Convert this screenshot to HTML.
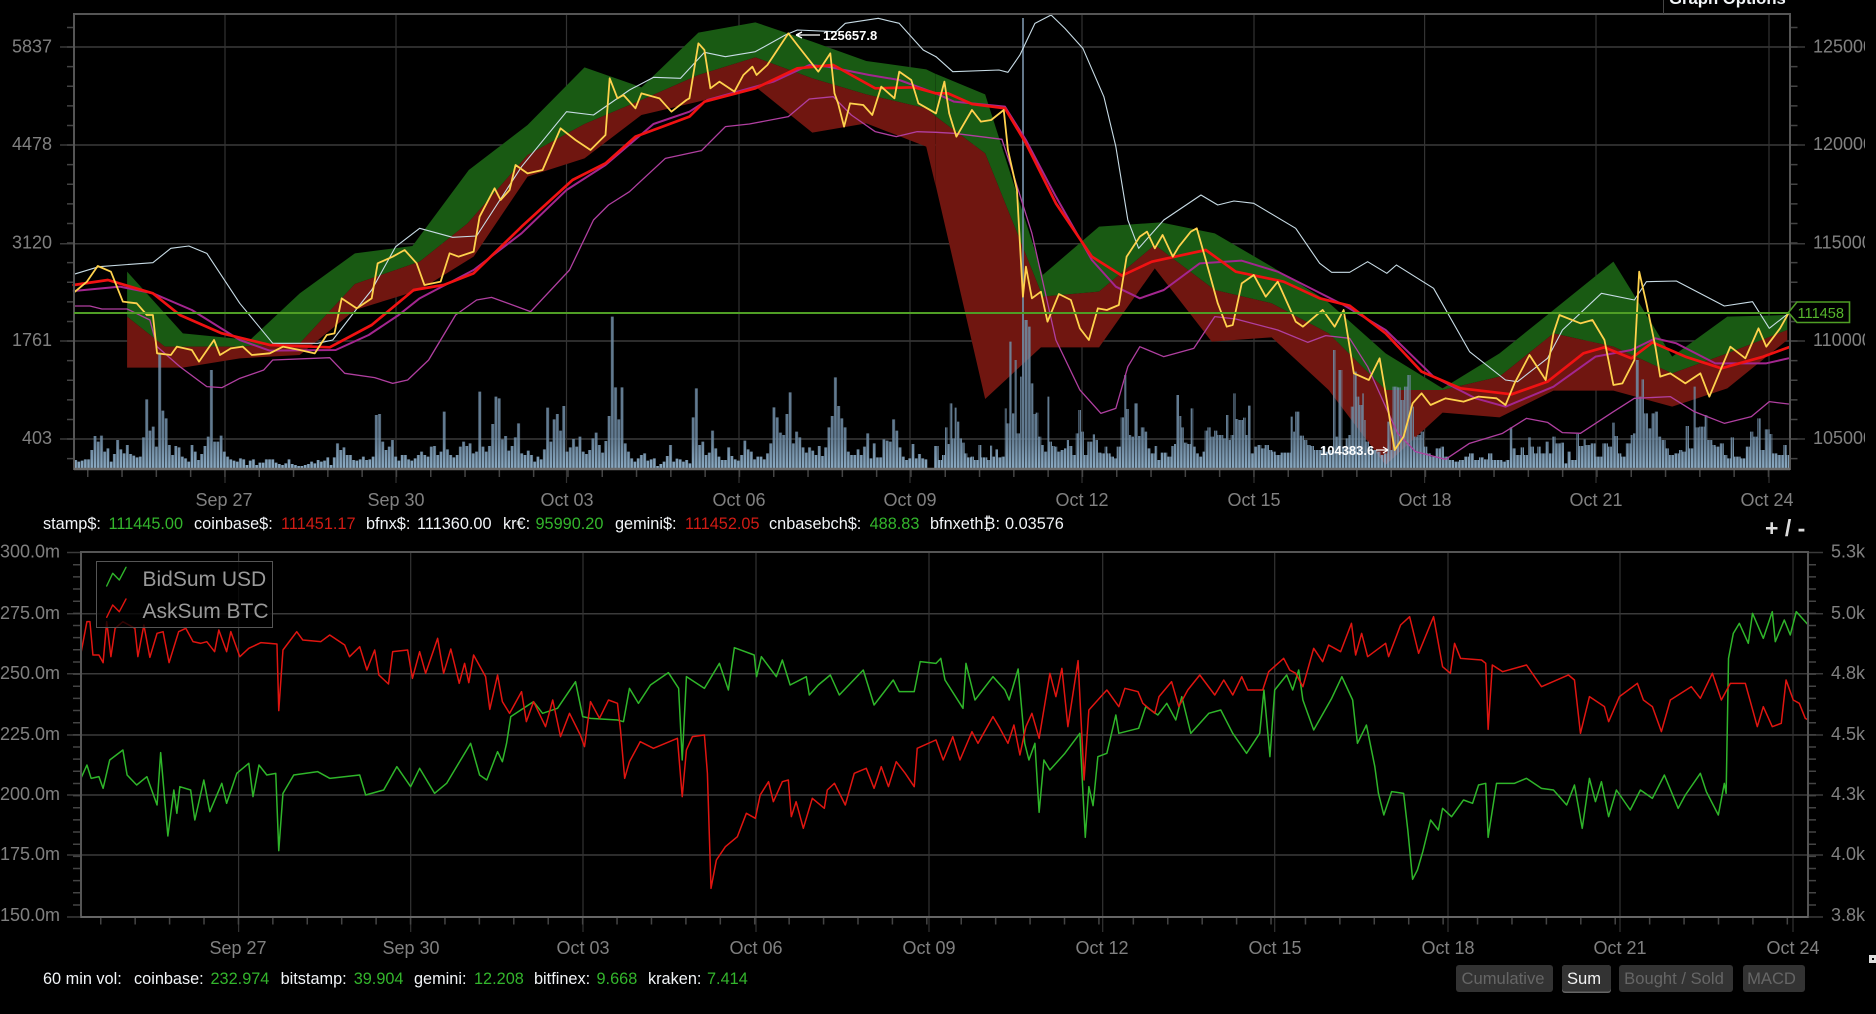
<!DOCTYPE html>
<html>
<head>
<meta charset="utf-8">
<style>
html,body{margin:0;padding:0;background:#000;width:1876px;height:1014px;overflow:hidden}
svg{display:block;font-family:"Liberation Sans",sans-serif}
.l{fill:none;stroke-linejoin:round;stroke-linecap:round;vector-effect:non-scaling-stroke}
.ax{fill:#808080;font-size:18px}
.i{font-size:16.3px;fill:#f2f5f8}
.g{font-size:16.3px;fill:#33b52c}
.r{font-size:16.3px;fill:#d01b14}
.b{font-size:16.6px;fill:#666;text-anchor:middle}
</style>
</head>
<body>
<svg width="1876" height="1014" viewBox="0 0 1876 1014" xmlns="http://www.w3.org/2000/svg">
<defs>
<clipPath id="rc"><rect x="1806" y="20" width="59" height="440"/></clipPath>
<linearGradient id="vg" gradientUnits="userSpaceOnUse" x1="0" x2="0" y1="0" y2="1388">
<stop offset="0" stop-color="#71879c"/>
<stop offset="0.93" stop-color="#6f8ca5"/>
<stop offset="1" stop-color="#a0c4e0"/>
</linearGradient>
<pattern id="vp" patternUnits="userSpaceOnUse" x="0" y="-1000" width="9.7" height="1400">
<rect x="0" y="0" width="9.7" height="1400" fill="#6a8398" fill-opacity=".4"/>
<rect x="1" y="0" width="7.5" height="1400" fill="url(#vg)"/>
</pattern>
</defs>

<!-- Top chart grid -->
<g stroke="#3a3a3a" stroke-width="1.5">
<line x1="60" x2="1805" y1="47" y2="47"/><line x1="60" x2="1805" y1="145" y2="145"/><line x1="60" x2="1805" y1="243.7" y2="243.7"/><line x1="60" x2="1805" y1="341" y2="341"/><line x1="60" x2="1805" y1="439" y2="439"/>
</g>
<g stroke="#333" stroke-width="1.2">
<line x1="225" x2="225" y1="14" y2="483"/><line x1="396" x2="396" y1="14" y2="483"/><line x1="566.5" x2="566.5" y1="14" y2="483"/><line x1="739" x2="739" y1="14" y2="483"/><line x1="910" x2="910" y1="14" y2="483"/><line x1="1082" x2="1082" y1="14" y2="483"/><line x1="1254" x2="1254" y1="14" y2="483"/><line x1="1424.6" x2="1424.6" y1="14" y2="483"/><line x1="1596" x2="1596" y1="14" y2="483"/><line x1="1769" x2="1769" y1="14" y2="483"/>
</g>
<g stroke="#444" fill="none">
<line x1="70.5" x2="70.5" y1="26.7" y2="460" stroke-width="7" stroke-dasharray="1.5 18.1"/>
<line x1="1794" x2="1794" y1="26.7" y2="460" stroke-width="7" stroke-dasharray="1.5 18.1"/>
<line x1="87" x2="1790" y1="473" y2="473" stroke-width="8" stroke-dasharray="1.5 32.8"/>
</g>

<!-- Bands, Z1 -->
<g transform="scale(0.59949,0.33333)">
<polygon fill="#195a13" points="212,815 305,1000 417,1020 500,880 592,760 688,738 782,510 880,375 975,202 1070,262 1165,98 1260,67 1355,125 1445,183 1545,208 1561,222 1561,350 1545,325 1445,283 1355,235 1260,172 1165,225 1070,300 975,372 880,465 780,670 700,785 592,852 500,1030 400,1040 275,1040 212,950"/>
<polygon fill="#701610" points="212,950 275,1040 400,1040 500,1030 592,852 700,785 780,670 880,465 975,372 1070,300 1165,225 1260,172 1355,235 1445,283 1545,325 1561,350 1561,560 1545,440 1445,370 1355,398 1260,260 1165,305 1070,345 975,475 880,530 790,770 700,870 592,930 500,1065 400,1075 305,1103 212,1103"/>
</g>
<!-- Bands, Z2 -->
<g transform="translate(936,0) scale(0.59949,0.33333)">
<polygon fill="#195a13" points="0,222 82,283 178,825 272,680 375,667 465,700 560,800 650,900 750,1060 845,1165 940,1060 1030,930 1130,785 1228,1070 1320,950 1420,945 1420,990 1320,1060 1228,1120 1130,1040 1030,1000 940,1130 845,1170 750,1170 655,1000 560,910 465,870 365,735 272,875 178,890 82,460 0,350"/>
<polygon fill="#701610" points="0,350 82,460 178,890 272,875 365,735 465,870 560,910 655,1000 750,1170 845,1170 940,1130 1030,1000 1130,1040 1228,1120 1320,1060 1420,990 1420,1020 1320,1165 1228,1220 1130,1172 1030,1172 940,1252 845,1238 750,1395 655,1170 560,1012 460,1025 365,805 272,1042 175,1042 82,1197 0,560"/>
</g>

<!-- Volume bars -->
<g fill="url(#vp)" fill-opacity=".88">
<path transform="translate(74,340) scale(.33333)" d="M0 388V360h9.7V365h9.7V362h9.7V358h9.7V358h9.7V330h9.7V288h9.7V305h9.7V287h9.7V335h9.7V325h9.7V365h9.7V342h9.7V300h9.7V328h9.7V340h9.7V315h9.7V342h9.7V347h9.7V352h9.7V350h9.7V292h9.7V178h9.7V272h9.7V260h9.7V320h9.7V40h9.7V212h9.7V235h9.7V315h9.7V345h9.7V318h9.7V322h9.7V350h9.7V355h9.7V365h9.7V315h9.7V335h9.7V360h9.7V342h9.7V318h9.7V290h9.7V90h9.7V305h9.7V305h9.7V287h9.7V335h9.7V350h9.7V358h9.7V362h9.7V365h9.7V355h9.7V358h9.7V375h9.7V362h9.7V358h9.7V375h9.7V368h9.7V368h9.7V358h9.7V358h9.7V358h9.7V368h9.7V372h9.7V375h9.7V370h9.7V358h9.7V372h9.7V375h9.7V378h9.7V378h9.7V375h9.7V372h9.7V365h9.7V370h9.7V360h9.7V365h9.7V362h9.7V352h9.7V375h9.7V352h9.7V310h9.7V330h9.7V322h9.7V345h9.7V345h9.7V360h9.7V362h9.7V358h9.7V350h9.7V360h9.7V358h9.7V350h9.7V225h9.7V222h9.7V305h9.7V330h9.7V320h9.7V300h9.7V350h9.7V362h9.7V345h9.7V345h9.7V358h9.7V362h9.7V355h9.7V345h9.7V335h9.7V345h9.7V350h9.7V320h9.7V318h9.7V345h9.7V335h9.7V215h9.7V328h9.7V345h9.7V352h9.7V345h9.7V320h9.7V305h9.7V318h9.7V310h9.7V340h9.7V335h9.7V155h9.7V320h9.7V335h9.7V318h9.7V252h9.7V170h9.7V175h9.7V298h9.7V388z"/>
<path transform="translate(504,340) scale(.33333)" d="M0 388V288h9.7V332h9.7V318h9.7V292h9.7V250h9.7V340h9.7V345h9.7V332h9.7V345h9.7V365h9.7V350h9.7V358h9.7V328h9.7V203h9.7V305h9.7V238h9.7V222h9.7V272h9.7V198h9.7V335h9.7V322h9.7V297h9.7V320h9.7V290h9.7V335h9.7V342h9.7V330h9.7V295h9.7V278h9.7V315h9.7V338h9.7V303h9.7V228h9.7V-70h9.7V142h9.7V238h9.7V142h9.7V310h9.7V335h9.7V355h9.7V365h9.7V355h9.7V345h9.7V340h9.7V362h9.7V358h9.7V355h9.7V378h9.7V372h9.7V365h9.7V348h9.7V315h9.7V365h9.7V356h9.7V358h9.7V365h9.7V360h9.7V370h9.7V232h9.7V145h9.7V315h9.7V305h9.7V345h9.7V338h9.7V272h9.7V325h9.7V350h9.7V360h9.7V360h9.7V322h9.7V348h9.7V358h9.7V362h9.7V345h9.7V302h9.7V328h9.7V335h9.7V358h9.7V350h9.7V350h9.7V358h9.7V340h9.7V310h9.7V202h9.7V232h9.7V278h9.7V285h9.7V222h9.7V157h9.7V310h9.7V275h9.7V292h9.7V322h9.7V338h9.7V322h9.7V332h9.7V345h9.7V318h9.7V348h9.7V322h9.7V262h9.7V228h9.7V112h9.7V198h9.7V235h9.7V262h9.7V335h9.7V345h9.7V345h9.7V328h9.7V345h9.7V320h9.7V280h9.7V355h9.7V310h9.7V352h9.7V352h9.7V298h9.7V302h9.7V305h9.7V238h9.7V272h9.7V322h9.7V350h9.7V360h9.7V355h9.7V312h9.7V355h9.7V342h9.7V355h9.7V358h9.7V388z"/>
<path transform="translate(934,340) scale(.33333)" d="M0 388V318H14V360H24V345H33V262H41V312H47V190H55V295H62V203H69V245H76V295H84V308H92V340H100V352H110V350H120V360H133V315H142V352H150V352H160V360H168V317H175V350H183V328H192V352H202V350H212V205H218V250H226V5H234V220H241V60H248V280H258V110H264V-966H270V-60H282V-40H290V130H298V222H305V218H313V290H322V315H330V335H340V170H346V305H354V318H362V320H370V335H380V330H390V325H398V300H405V318H415V345H425V280H433V210H441V275H450V345H460V305H468V305H476V283H483V300H492V338H502V340H512V320H520V340H530V350H540V355H548V320H560V232H570V105H577V207H585V285H592V290H600V190H612V288H620V262H632V275H640V325H650V340H662V318H670V360H680V338H690V338H700V350H712V318H720V312H726V165H735V228H742V262H750V308H760V312H770V205H778V320H786V340H795V350H805V335H812V272H820V262H830V290H840V272H850V285H857V285H868V295H876V225H884V300H890V285H898V160H905V237H913V240H927V233H935V285H942V197H950V340H960V320H970V315H982V325H992V315H1005V330H1015V335H1025V345H1040V338H1060V338H1070V230H1077V275H1083V215H1097V287H1110V300H1120V315H1130V318H1140V330H1155V330H1165V320H1175V335H1185V330H1197V30H1205V290H1213V90H1225V320H1235V295H1243V285H1250V200H1258V95H1268V170H1276V195H1285V160H1290V388z"/>
<path transform="translate(1364,340) scale(.33333)" d="M0 388V240H5V305H15V320H25V330H40V335H50V345H60V340H70V245H80V330H85V140H100V142H110V180H120V140H130V105H140V200H150V290H160V285H170V275H180V320H190V340H200V350H215V325H230V320H240V350H255V360H270V365H285V360H300V350H315V340H330V360H345V352H360V358H372V340H385V360H400V360H415V365H425V360H437V262H445V325H455V345H470V322H480V345H492V292H500V320H510V340H520V320H530V340H545V305H555V340H565V290H575V310H590V308H600V370H610V335H620V360H637V282H645V318H658V298H665V315H680V310H695V350H715V310H725V310H732V320H744V248H752V288H762V340H772V350H785V310H800V285H807V280H815V60H825V170H832V118H840V220H852V265H862V220H872V215H882V290H892V300H905V325H915V345H930V340H945V330H955V335H965V258H975V325H988V140H995V262H1005V260H1022V225H1030V300H1045V315H1055V320H1067V310H1080V345H1090V355H1100V292H1110V350H1130V355H1145V320H1158V275H1168V290H1180V235H1190V330H1202V268H1217V282H1225V340H1240V345H1258V315H1268V345H1278V350H1278V388z"/>
</g>

<!-- Top chart lines, Z1 -->
<g transform="scale(0.59949,0.33333)">
<polyline class="l" stroke="#c8dce6" stroke-width="1.1" points="123,823 165,800 255,788 285,745 315,738 345,760 400,910 455,1030 530,1030 555,1020 600,915 620,870 660,740 700,685 755,712 795,708 870,500 945,335 990,345 1050,270 1090,232 1135,235 1175,157 1210,170 1260,155 1310,105 1330,90 1395,95 1410,70 1465,55 1500,70 1540,150 1561,170"/>
<polyline class="l" stroke="#b03fa0" stroke-width="1.3" points="123,918 150,918 170,927 212,927 250,960 262,1040 300,1100 345,1160 370,1163 400,1135 440,1110 455,1080 550,1073 575,1120 625,1133 655,1150 680,1140 715,1080 760,945 795,900 820,892 885,935 950,810 990,660 1015,615 1050,575 1110,475 1170,452 1210,380 1250,372 1315,350 1350,297 1390,290 1420,345 1460,395 1495,410 1530,395 1561,397"/>
<polyline class="l" stroke="#a3268f" stroke-width="2" points="123,873 200,860 255,880 320,930 400,1020 450,1052 560,1050 615,1005 665,945 700,895 790,810 870,700 945,570 1010,495 1090,372 1150,335 1180,300 1290,245 1350,195 1380,200 1450,225 1500,240 1561,280"/>
<polyline class="l" stroke="#f01212" stroke-width="2.7" points="123,855 180,840 255,880 300,945 370,1000 450,1035 550,1042 620,975 690,870 740,855 790,820 870,680 955,540 1010,490 1060,410 1150,350 1175,305 1260,265 1330,205 1390,195 1460,265 1525,262 1561,280"/>
<polyline class="l" stroke="#ffd24d" stroke-width="1.8" points="125,875 145,845 163,798 185,815 205,905 228,910 245,945 255,945 262,1060 285,1065 295,1040 320,1050 332,1085 357,1020 367,1065 385,1045 405,1040 420,1065 450,1060 472,1040 500,1050 525,1060 545,1005 558,1000 570,895 595,925 620,895 630,790 655,770 675,750 695,790 708,855 735,845 750,760 765,770 790,755 800,650 825,565 835,600 850,570 860,495 880,520 905,510 935,385 960,420 985,450 1010,405 1017,235 1030,295 1040,285 1060,325 1070,280 1100,295 1120,335 1145,300 1150,295 1165,130 1175,150 1185,265 1200,245 1225,275 1240,225 1255,200 1262,225 1280,195 1315,100 1330,135 1365,215 1385,160 1392,280 1398,310 1408,380 1418,310 1440,315 1455,345 1470,260 1492,295 1500,215 1520,240 1532,310 1561,340"/>
</g>
<!-- Top chart lines, Z2 -->
<g transform="translate(936,0) scale(0.59949,0.33333)">
<polyline class="l" stroke="#c8dce6" stroke-width="1.1" points="0,170 28,215 105,210 120,217 140,165 165,70 192,45 215,85 245,145 280,290 300,440 320,660 338,745 380,660 442,585 470,615 497,603 530,610 600,685 640,790 660,817 690,817 720,785 752,820 768,795 830,865 890,1055 950,1140 970,1145 1020,1075 1045,990 1110,880 1165,900 1185,845 1235,843 1315,918 1362,905 1390,985 1422,940"/>
<polyline class="l" stroke="#b03fa0" stroke-width="1.3" points="0,397 30,400 110,418 125,500 160,700 200,1020 240,1170 275,1240 300,1225 320,1100 340,1040 380,1070 430,1045 465,950 500,957 570,990 620,1027 650,1007 690,1015 720,1100 770,1300 800,1355 850,1378 890,1330 945,1300 985,1255 1020,1267 1045,1298 1075,1300 1130,1235 1165,1195 1225,1190 1265,1235 1315,1270 1360,1250 1390,1205 1422,1212"/>
<polyline class="l" stroke="#a3268f" stroke-width="2" points="0,280 30,305 115,320 150,420 200,590 260,780 300,860 340,895 380,870 440,790 510,782 570,815 680,915 750,990 830,1130 900,1195 950,1220 1030,1160 1100,1070 1160,1050 1200,1015 1235,1030 1300,1090 1385,1090 1422,1075"/>
<polyline class="l" stroke="#f01212" stroke-width="2.7" points="0,280 20,280 60,312 115,325 150,430 200,610 260,770 310,827 360,785 450,750 500,815 580,845 640,895 690,917 750,1000 810,1115 875,1165 960,1183 1020,1145 1080,1060 1115,1042 1160,1075 1195,1027 1250,1070 1310,1105 1380,1070 1422,1042"/>
<polyline class="l" stroke="#ffd24d" stroke-width="1.8" points="0,340 14,245 22,340 34,410 60,330 75,365 92,360 113,330 120,450 135,570 145,890 150,800 160,895 175,875 186,965 205,882 225,900 240,985 255,1020 270,925 285,930 305,915 318,770 340,710 352,695 365,745 378,705 395,770 405,740 425,695 435,685 450,780 470,910 485,980 495,975 510,850 530,825 550,890 570,845 600,965 612,980 645,930 665,980 680,930 697,1120 722,1140 740,1075 750,1180 765,1350 780,1310 795,1210 810,1180 825,1215 850,1195 880,1205 905,1190 935,1195 950,1215 965,1150 990,1065 1017,1140 1030,1000 1040,945 1075,970 1095,960 1115,1020 1130,1155 1145,1150 1165,1080 1173,815 1185,910 1200,1040 1208,1130 1225,1120 1250,1150 1275,1120 1290,1190 1325,1040 1350,1075 1372,985 1385,1040 1408,985 1422,940"/>
</g>

<!-- Top axes frame -->
<g fill="none">
<rect x="74" y="14" width="1716" height="455" stroke="#555" stroke-width="2"/>
<line x1="74" x2="1790" y1="469" y2="469" stroke="#6a6a6a" stroke-width="2.5"/>
</g>
<line x1="74" x2="1790" y1="313" y2="313" stroke="#4f9e25" stroke-width="2"/>

<!-- Graph options -->
<g>
<line x1="1663.5" x2="1663.5" y1="0" y2="14" stroke="#444"/>
<text x="1669" y="4" font-size="16.7" font-weight="bold" fill="#f2f5f8">Graph Options</text>
</g>

<!-- Top y labels -->
<g class="ax" text-anchor="end">
<text x="52" y="52.3">5837</text><text x="52" y="150">4478</text><text x="52" y="248.7">3120</text><text x="52" y="346">1761</text><text x="52" y="444">403</text>
</g>
<g class="ax" clip-path="url(#rc)">
<text x="1813" y="52.3">125000</text><text x="1813" y="150">120000</text><text x="1813" y="248.7">115000</text><text x="1813" y="346">110000</text><text x="1813" y="444">105000</text>
</g>
<!-- Top x labels -->
<g class="ax" text-anchor="middle">
<text x="224" y="506">Sep 27</text><text x="396" y="506">Sep 30</text><text x="567" y="506">Oct 03</text><text x="739" y="506">Oct 06</text><text x="910" y="506">Oct 09</text><text x="1082" y="506">Oct 12</text><text x="1254" y="506">Oct 15</text><text x="1425" y="506">Oct 18</text><text x="1596" y="506">Oct 21</text><text x="1767" y="506">Oct 24</text>
</g>

<!-- Annotations -->
<path d="M796 35H820M796 35l6-3M796 35l6 3" stroke="#fff" stroke-width="1.3" fill="none"/>
<text x="823" y="40" font-size="13" font-weight="bold" fill="#fff">125657.8</text>
<text x="1320" y="455" font-size="13" font-weight="bold" fill="#fff">104383.6</text>
<path d="M1376 450H1388M1388 450l-5-3M1388 450l-5 3" stroke="#fff" stroke-width="1.3" fill="none"/>

<!-- Price tag -->
<polygon points="1788.5,312.5 1797,302 1849.5,302 1849.5,322.5 1797,322.5" fill="#000" stroke="#4f9e25" stroke-width="1.6"/>
<text x="1797.5" y="318" font-size="14.6" fill="#55b52c">111458</text>

<!-- Info line 1 -->
<text class="i" x="43" y="529">stamp$:</text><text class="g" x="108.5" y="529">111445.00</text>
<text class="i" x="194" y="529">coinbase$:</text><text class="r" x="281" y="529">111451.17</text>
<text class="i" x="366" y="529">bfnx$:</text><text class="i" x="417" y="529">111360.00</text>
<text class="i" x="503" y="529">kr€:</text><text class="g" x="535.5" y="529">95990.20</text>
<text class="i" x="615" y="529">gemini$:</text><text class="r" x="685" y="529">111452.05</text>
<text class="i" x="769" y="529">cnbasebch$:</text><text class="g" x="869.6" y="529">488.83</text>
<text class="i" x="930" y="529">bfnxeth₿:</text><text class="i" x="1005" y="529">0.03576</text>
<text x="1765" y="536" font-size="23" font-weight="bold" fill="#dcdcdc">+ / -</text>

<!-- Bottom chart grid -->
<g stroke="#3a3a3a" stroke-width="1.5">
<line x1="67" x2="1823" y1="613.7" y2="613.7"/><line x1="67" x2="1823" y1="673.7" y2="673.7"/><line x1="67" x2="1823" y1="735" y2="735"/><line x1="67" x2="1823" y1="795" y2="795"/><line x1="67" x2="1823" y1="855" y2="855"/>
<line x1="67" x2="81" y1="552.5" y2="552.5"/><line x1="1808" x2="1823" y1="552.5" y2="552.5"/><line x1="67" x2="81" y1="917" y2="917"/><line x1="1808" x2="1823" y1="917" y2="917"/>
</g>
<g stroke="#333" stroke-width="1.2">
<line x1="238.6" x2="238.6" y1="552" y2="932"/><line x1="410.7" x2="410.7" y1="552" y2="932"/><line x1="583" x2="583" y1="552" y2="932"/><line x1="756" x2="756" y1="552" y2="932"/><line x1="929" x2="929" y1="552" y2="932"/><line x1="1102.7" x2="1102.7" y1="552" y2="932"/><line x1="1274.7" x2="1274.7" y1="552" y2="932"/><line x1="1448" x2="1448" y1="552" y2="932"/><line x1="1620" x2="1620" y1="552" y2="932"/><line x1="1793" x2="1793" y1="552" y2="932"/>
</g>
<g stroke="#444" fill="none">
<line x1="77" x2="77" y1="564" y2="910" stroke-width="8" stroke-dasharray="1.5 10.65"/>
<line x1="1812" x2="1812" y1="564" y2="910" stroke-width="8" stroke-dasharray="1.5 10.65"/>
<line x1="100" x2="1808" y1="921" y2="921" stroke-width="7" stroke-dasharray="1.5 32.92"/>
</g>

<!-- Bottom lines, Z3 -->
<g transform="translate(0,500) scale(0.59949,0.33333)">
<polyline class="l" stroke="#2fb52a" stroke-width="1.5" points="135,835 145,795 152,835 165,830 172,865 183,780 205,750 212,825 228,855 245,830 262,915 268,758 280,1008 290,870 295,940 300,860 318,870 325,960 340,840 350,935 370,850 378,910 395,820 415,790 422,890 432,795 445,825 460,820 465,1052 472,880 490,825 530,815 550,835 600,825 610,885 640,870 662,800 685,860 700,805 725,880 745,850 770,775 785,730 800,825 812,840 830,755 838,785 845,730 852,650 890,605 905,640 930,625 960,545 972,650 985,655 1030,660 1040,665 1050,565 1065,610 1085,555 1115,518 1132,565 1138,780 1145,530 1175,565 1200,490 1215,570 1225,443 1258,465 1262,530 1270,470 1295,530 1305,480 1318,555 1345,530 1350,585 1365,555 1385,525 1400,585 1440,510 1458,615 1490,540 1500,575 1525,575 1535,485 1561,490"/>
<polyline class="l" stroke="#e01510" stroke-width="1.5" points="135,460 145,365 150,365 155,465 165,465 172,488 178,365 185,470 192,385 205,365 225,385 230,470 240,375 250,472 262,400 272,395 282,488 298,395 310,385 322,425 335,430 345,425 358,455 365,390 378,455 385,395 400,470 415,445 435,428 462,432 465,632 472,450 495,395 505,420 535,425 550,405 575,435 583,470 600,440 612,510 625,450 632,525 648,552 655,455 680,450 688,535 700,455 710,520 730,415 740,520 752,447 766,550 775,490 782,548 790,465 810,530 817,628 830,525 838,605 850,640 870,575 878,665 890,605 910,680 922,600 935,710 950,640 968,705 975,740 985,605 1000,655 1015,600 1030,610 1035,690 1042,835 1050,785 1068,725 1090,745 1130,715 1138,890 1145,750 1155,710 1175,705 1180,820 1186,1165 1195,1080 1210,1040 1230,1010 1245,940 1260,955 1268,885 1282,845 1290,905 1305,845 1315,840 1320,950 1328,905 1340,985 1355,895 1375,925 1380,870 1392,850 1410,915 1425,820 1445,805 1458,865 1470,800 1482,860 1495,785 1510,820 1525,860 1530,745 1561,720"/>
</g>
<!-- Bottom lines, Z4 -->
<g transform="translate(936,500) scale(0.59949,0.33333)">
<polyline class="l" stroke="#2fb52a" stroke-width="1.5" points="0,490 8,475 15,540 45,625 50,490 65,600 95,530 115,570 122,600 137,507 148,730 155,780 165,730 172,937 180,780 190,810 215,760 240,700 249,1012 255,860 262,917 270,770 285,760 300,645 305,700 338,685 350,620 370,645 385,610 400,660 410,590 425,700 455,640 475,630 495,700 518,760 540,700 547,570 557,770 565,570 585,525 595,570 605,510 612,600 630,690 660,595 677,530 695,600 703,730 718,675 732,800 738,880 747,945 760,875 780,880 787,990 795,1138 803,1110 812,1055 825,960 838,990 845,925 860,950 880,900 895,910 905,855 917,850 921,1012 935,850 965,850 985,835 1010,865 1030,870 1052,915 1065,855 1078,985 1090,835 1100,905 1110,845 1122,950 1135,870 1158,930 1175,870 1195,895 1215,825 1238,925 1250,885 1275,820 1285,875 1305,945 1315,850 1318,880 1322,475 1330,400 1340,370 1355,430 1362,340 1380,415 1395,335 1400,425 1415,360 1425,405 1435,335 1455,375"/>
<polyline class="l" stroke="#e01510" stroke-width="1.5" points="0,720 12,780 28,710 40,780 60,695 70,730 95,650 105,680 120,730 130,675 140,765 150,680 160,640 172,715 190,520 200,590 210,505 220,680 237,482 247,840 255,630 275,590 285,570 305,620 315,565 337,575 345,610 365,640 372,590 393,545 405,620 420,570 440,525 465,585 480,540 495,585 510,530 520,570 545,570 555,515 580,475 590,510 600,520 612,560 630,445 645,485 655,435 675,455 693,370 700,465 710,400 720,470 750,430 755,470 775,375 790,350 805,460 830,350 845,500 858,520 865,430 875,475 910,480 917,490 921,688 928,495 945,515 985,495 1010,560 1055,525 1065,540 1075,700 1090,590 1115,620 1122,665 1140,590 1170,550 1180,600 1195,620 1210,695 1225,600 1260,560 1275,595 1295,520 1310,600 1325,550 1350,550 1370,680 1380,620 1395,680 1410,670 1418,540 1430,600 1440,610 1450,655 1455,660"/>
</g>

<!-- Bottom axes -->
<rect x="81" y="552" width="1727" height="365" fill="none" stroke="#555" stroke-width="2"/>
<line x1="81" x2="1808" y1="917" y2="917" stroke="#666" stroke-width="2"/>
<g class="ax" text-anchor="end">
<text x="60" y="557.5">300.0m</text><text x="60" y="619">275.0m</text><text x="60" y="679">250.0m</text><text x="60" y="740">225.0m</text><text x="60" y="800">200.0m</text><text x="60" y="860">175.0m</text><text x="60" y="921">150.0m</text>
</g>
<g class="ax">
<text x="1831" y="557.5">5.3k</text><text x="1831" y="619">5.0k</text><text x="1831" y="679">4.8k</text><text x="1831" y="740">4.5k</text><text x="1831" y="800">4.3k</text><text x="1831" y="860">4.0k</text><text x="1831" y="921">3.8k</text>
</g>
<g class="ax" text-anchor="middle">
<text x="238" y="954">Sep 27</text><text x="411" y="954">Sep 30</text><text x="583" y="954">Oct 03</text><text x="756" y="954">Oct 06</text><text x="929" y="954">Oct 09</text><text x="1102" y="954">Oct 12</text><text x="1275" y="954">Oct 15</text><text x="1448" y="954">Oct 18</text><text x="1620" y="954">Oct 21</text><text x="1793" y="954">Oct 24</text>
</g>

<!-- Legend -->
<rect x="96.5" y="561.5" width="176" height="66" fill="#000" fill-opacity=".78" stroke="#555" stroke-width="1"/>
<polyline class="l" stroke="#2fb52a" stroke-width="1.4" points="106.7,586 112.7,573.3 119.3,580 126,567.3"/>
<polyline class="l" stroke="#e01510" stroke-width="1.4" points="106.7,617.3 112.7,605 119.3,611.7 126,599"/>
<text x="142.5" y="586" font-size="21" fill="#999">BidSum USD</text>
<text x="142.5" y="618" font-size="21" fill="#999">AskSum BTC</text>

<!-- Info line 2 -->
<text class="i" x="43" y="984">60 min vol:</text>
<text class="i" x="134" y="984">coinbase:</text><text class="g" x="210.5" y="984">232.974</text>
<text class="i" x="280.6" y="984">bitstamp:</text><text class="g" x="353.7" y="984">39.904</text>
<text class="i" x="414" y="984">gemini:</text><text class="g" x="474" y="984">12.208</text>
<text class="i" x="534" y="984">bitfinex:</text><text class="g" x="596.5" y="984">9.668</text>
<text class="i" x="648" y="984">kraken:</text><text class="g" x="707" y="984">7.414</text>

<!-- Buttons -->
<rect x="1456" y="965" width="97" height="27" rx="3" fill="#333"/><text class="b" x="1503" y="984">Cumulative</text>
<rect x="1562" y="965" width="49" height="28" rx="3" fill="#666"/><rect x="1562" y="965" width="49" height="26.5" rx="3" fill="#333"/><text class="b" x="1584" y="984" style="fill:#f2f2f2">Sum</text>
<rect x="1619" y="965" width="114" height="27" rx="3" fill="#333"/><text class="b" x="1674" y="984">Bought / Sold</text>
<rect x="1743" y="965" width="62" height="27" rx="3" fill="#333"/><text class="b" x="1771.5" y="984">MACD</text>

<!-- Scroll glyph -->
<rect x="1869" y="955" width="7" height="8" fill="#ddd"/><rect x="1872" y="958" width="2" height="2" fill="#000"/>
</svg>
</body>
</html>
